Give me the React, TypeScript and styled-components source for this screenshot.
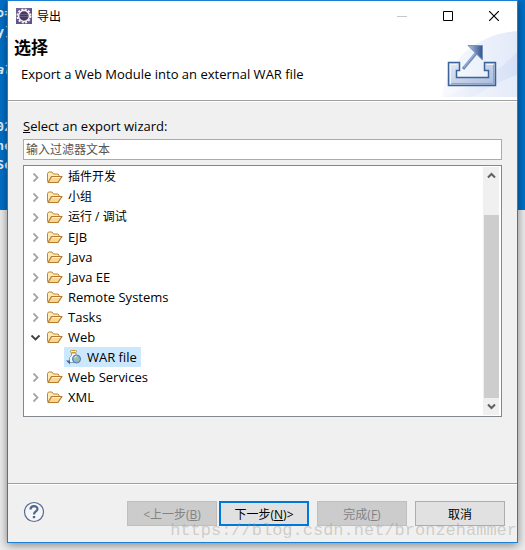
import React, { useState } from "react";
import styled, { createGlobalStyle } from "styled-components";

const GlobalStyle = createGlobalStyle`
  * { box-sizing: border-box; }
  body { margin: 0; }
  body, button, input {
    font-family: "Open Sans", "Noto Sans CJK SC", sans-serif;
    font-size: 12px;
    color: #000;
  }
`;

const Desktop = styled.div`
  position: relative;
  overflow: hidden;
  min-height: 100vh;
  padding: 0 7px 7px;
  display: flex;
  background: linear-gradient(#0070c8 0 210px, #ececec 210px);
`;

const Editor = styled.pre`
  position: absolute;
  top: 3px;
  left: 0;
  width: 12px;
  margin: 0;
  display: flex;
  flex-direction: column;
  align-items: flex-end;
  color: #e6f0fa;
  font: bold 13px/19px "DejaVu Sans Mono", monospace;
`;

const CodeLine = styled.span<{ $italic?: boolean }>`
  height: 19px;
  font-style: ${(p) => (p.$italic ? "italic" : "normal")};
`;

const Dialog = styled.main`
  position: relative;
  flex: 1;
  min-width: 0;
  display: flex;
  flex-direction: column;
  background: #f0f0f0;
  border: 1px solid #1a80d4;
  box-shadow: 0 2px 9px rgba(0, 0, 0, 0.45);
`;

const TitleBar = styled.header`
  height: 29px;
  display: flex;
  align-items: center;
  padding-left: 8px;
  background: #fff;
`;

const WindowTitle = styled.h1`
  flex: 1;
  margin: 0 0 0 5px;
  font-size: 12px;
  font-weight: 400;
`;

const WindowButton = styled.button`
  width: 46px;
  height: 29px;
  padding: 0;
  border: 0;
  background: transparent;
  display: grid;
  place-items: center;
`;

const Banner = styled.section`
  height: 71px;
  display: flex;
  justify-content: space-between;
  background: #fff;
  border-bottom: 1px solid #a0a0a0;
`;

const BannerText = styled.div`
  padding: 6px 0 0 6px;
`;

const BannerTitle = styled.h2`
  margin: 0;
  font-size: 17px;
  line-height: 24px;
  font-weight: 700;
`;

const BannerNote = styled.p`
  margin: 4px 0 0 7px;
  font-size: 13px;
  line-height: 20px;
`;

const Body = styled.section`
  flex: 1;
  display: flex;
  flex-direction: column;
  padding: 15px 15px 66px;
  border-top: 1px solid #fff;
  border-bottom: 1px solid #a0a0a0;
`;

const FilterLabel = styled.label`
  font-size: 13px;
  line-height: 18px;
`;

const FilterInput = styled.input`
  width: 100%;
  height: 21px;
  margin: 4px 0 5px;
  padding: 0 2px;
  border: 1px solid #ababab;
  background: #fff;
  &::placeholder {
    color: #555;
    opacity: 1;
  }
`;

const TreePane = styled.div`
  flex: 1;
  display: flex;
  justify-content: space-between;
  padding: 1px;
  border: 1px solid #828790;
  background: #fff;
`;

const Tree = styled.ul`
  list-style: none;
  margin: 0;
  padding: 0 0 0 3px;
`;

const TreeRow = styled.li<{ $child?: boolean }>`
  height: 20px;
  display: flex;
  align-items: center;
  padding-left: ${(p) => (p.$child ? "36px" : "0")};
`;

const Toggle = styled.button`
  width: 15px;
  height: 20px;
  margin-right: 4px;
  padding: 0;
  border: 0;
  background: transparent;
  display: grid;
  place-items: center;
`;

const Item = styled.button<{ $selected?: boolean; $child?: boolean }>`
  height: 20px;
  display: flex;
  align-items: center;
  gap: 5px;
  padding: 0 4px 0 ${(p) => (p.$child ? "2px" : "0")};
  border: 0;
  font-size: 13px;
  line-height: 20px;
  white-space: nowrap;
  background: ${(p) => (p.$selected ? "#cce8ff" : "transparent")};
`;

const Cjk = styled.span`
  font-size: 12px;
`;

const ScrollBar = styled.div`
  width: 16px;
  margin-right: 1px;
  display: flex;
  flex-direction: column;
  background: #f0f0f0;
`;

const ScrollButton = styled.button`
  height: 17px;
  padding: 0;
  border: 0;
  background: transparent;
  display: grid;
  place-items: center;
`;

const ScrollTrack = styled.div`
  flex: 1;
  display: flex;
  padding: 31px 0 0 1px;
`;

const ScrollThumb = styled.div`
  flex: 1;
  background: #cdcdcd;
`;

const Footer = styled.footer`
  height: 58px;
  display: flex;
  align-items: center;
  padding: 0 12px 0 15px;
  border-top: 1px solid #fff;
`;

const HelpButton = styled.button`
  display: flex;
  padding: 0;
  margin: 0 auto 4px 0;
  border: 0;
  background: transparent;
`;

const Actions = styled.div`
  display: flex;
  gap: 8px;
`;

const StepPair = styled.div`
  display: flex;
  gap: 2px;
`;

const ActionButton = styled.button<{ $primary?: boolean }>`
  width: 90px;
  height: 25px;
  padding: 0;
  border: ${(p) => (p.$primary ? "2px solid #0078d7" : "1px solid #adadad")};
  background: #e1e1e1;
  &:disabled {
    color: #838383;
    background: #ccc;
    border-color: #bfbfbf;
  }
`;

const Watermark = styled.span`
  position: absolute;
  right: 8px;
  bottom: 7px;
  pointer-events: none;
  color: rgba(150, 150, 140, 0.4);
  font: 17px/24px "Liberation Mono", monospace;
`;

const EclipseIcon = () => (
  <svg width="16" height="16" viewBox="0 0 16 16" aria-hidden="true">
    <rect width="16" height="16" fill="#65518a" />
    <path d="M0 0h16L0 12z" fill="#806da3" opacity=".5" />
    <circle cx="8" cy="8" r="6.5" fill="none" stroke="#f4f2ef" strokeWidth="2" strokeDasharray="2 1.4" />
    <circle cx="8" cy="8" r="5.4" fill="#46395f" stroke="#f4f2ef" strokeWidth="1.5" />
    <path d="M4 6.5h8M4 8.5h8" stroke="#665b80" />
  </svg>
);

const ExportArt = () => (
  <svg width="75" height="67" viewBox="0 0 75 67" aria-hidden="true">
    <defs>
      <linearGradient id="glow" x1="0" y1="0" x2="1" y2="0">
        <stop offset="0" stopColor="#f4f7fd" />
        <stop offset="1" stopColor="#d3def5" />
      </linearGradient>
      <linearGradient id="tray" x1="0" y1="0" x2="1" y2="1">
        <stop offset="0" stopColor="#e4eaf5" />
        <stop offset="1" stopColor="#a9badb" />
      </linearGradient>
      <linearGradient id="head" x1="0" y1="0" x2="1" y2="0">
        <stop offset="0" stopColor="#b4c3df" />
        <stop offset="1" stopColor="#31558f" />
      </linearGradient>
    </defs>
    <path d="M0 67C4 34 30 5 75 1v66z" fill="url(#glow)" opacity=".65" />
    <path d="M0 67C25 58 55 45 75 22v45z" fill="url(#glow)" opacity=".8" />
    <path d="M30 67C45 59 60 50 75 45v22z" fill="#fff" opacity=".35" />
    <path
      d="M6.500 32.500H17.500V40.500H14.500V47.500H46.500V40.500H42.500V32.500H53.500V55.500H6.500z"
      fill="url(#tray)" stroke="#3a639b" strokeWidth="1.500"
    />
    <path d="M8.500 54V34.500H15M44.500 34.500H51" fill="none" stroke="#f1f5fb" />
    <path d="M9 53.500H51.500V35" fill="none" stroke="#8ea5cc" />
    <path d="M21 39L36 21" stroke="#7791bd" strokeWidth="3" />
    <path d="M22 37L36 20" stroke="#a5b6d5" />
    <path d="M26 15.500H40.500V30z" fill="url(#head)" stroke="#7891bd" strokeWidth="1" />
  </svg>
);

const FolderIcon = () => (
  <svg width="16" height="16" viewBox="0 0 16 16" aria-hidden="true">
    <path d="M.5 12.500V4.500L1.500 3H5L6.500 5H11L12 6V8" fill="#fdebb9" stroke="#bd8639" />
    <path d="M1 13.500L4.500 7.500H15L11 13.500z" fill="#f8d793" stroke="#b67b31" strokeWidth="1.200" strokeLinejoin="round" />
    <path d="M5.500 8.500H13" stroke="#fff1cb" />
  </svg>
);

const WarIcon = () => (
  <svg width="16" height="16" viewBox="0 0 16 16" aria-hidden="true">
    <path d="M5.500 4V6.500L3.500 8.500V13.500H11V7L10 6V4z" fill="#f7f9fc" stroke="#8ba2bc" />
    <rect x="4.500" y="1.500" width="6" height="2" rx="1" fill="#fff2b6" stroke="#c79a32" />
    <circle cx="10.500" cy="10" r="4" fill="#8eb3dc" stroke="#4f78aa" />
    <path d="M8 9l2-2 2 1-1 2-1 2zM12 11l2-1-2 3z" fill="#a2c993" />
    <path d="M8.500 8.500l2-1.500" stroke="#fff" />
    <path d="M0 11.500h4v4z" fill="#286d9e" />
  </svg>
);

const Chevron = ({ open }: { open?: boolean }) => (
  <svg width="11" height="11" viewBox="0 0 11 11" fill="none" strokeWidth="1.800" aria-hidden="true">
    {open ? <path d="M1.500 3.500l4 4 4-4" stroke="#404040" /> : <path d="M3.500 1.500l4 4-4 4" stroke="#a6a6a6" />}
  </svg>
);

const ScrollArrow = ({ down }: { down?: boolean }) => (
  <svg width="9" height="7" viewBox="0 0 9 7" fill="none" aria-hidden="true">
    <path d={down ? "M1 1.500l3.500 3.500L8 1.500" : "M1 5.500L4.500 2 8 5.500"} stroke="#606060" strokeWidth="2" />
  </svg>
);

const HelpIcon = () => (
  <svg width="22" height="22" viewBox="0 0 22 22" fill="none" aria-hidden="true">
    <circle cx="11" cy="11" r="9.500" fill="#f5f6f9" stroke="#596b8f" strokeWidth="1.200" />
    <path d="M7.500 8.500C7.500 4 14.500 4 14.500 8C14.500 10.500 11 10.500 11 13.500" stroke="#52658c" strokeWidth="2.200" />
    <path d="M9.800 15h2.400v2.200H9.800z" fill="#52658c" />
  </svg>
);

const codeLines = [
  { text: "o=" }, { text: "y]" }, { text: " " }, { text: "al", italic: true }, { text: " " },
  { text: " " }, { text: "02" }, { text: "ne" }, { text: "Se" },
];

const wizards = [
  { name: "插件开发", cjk: true }, { name: "小组", cjk: true }, { name: "运行 / 调试", cjk: true },
  { name: "EJB" }, { name: "Java" }, { name: "Java EE" }, { name: "Remote Systems" },
  { name: "Tasks" }, { name: "Web", children: ["WAR file"] }, { name: "Web Services" }, { name: "XML" },
];

export default function App() {
  const [webOpen, setWebOpen] = useState(true);
  const [selected, setSelected] = useState("WAR file");
  const [filter, setFilter] = useState("");

  return (
    <Desktop>
      <GlobalStyle />
      <Editor aria-hidden="true">
        {codeLines.map((line, i) => <CodeLine key={i} $italic={line.italic}>{line.text}</CodeLine>)}
      </Editor>
      <Dialog>
        <TitleBar>
          <EclipseIcon />
          <WindowTitle>导出</WindowTitle>
          <WindowButton aria-label="最小化" disabled>
            <svg width="10" height="10"><path d="M0 5.500h10" stroke="#c8c8c8" /></svg>
          </WindowButton>
          <WindowButton aria-label="最大化">
            <svg width="10" height="10"><path d="M.5.5h9v9h-9z" fill="none" stroke="#000" /></svg>
          </WindowButton>
          <WindowButton aria-label="关闭">
            <svg width="10" height="10"><path d="M0 0l10 10M10 0L0 10" stroke="#000" strokeWidth="1.200" /></svg>
          </WindowButton>
        </TitleBar>
        <Banner>
          <BannerText>
            <BannerTitle>选择</BannerTitle>
            <BannerNote>Export a Web Module into an external WAR file</BannerNote>
          </BannerText>
          <ExportArt />
        </Banner>
        <Body>
          <FilterLabel htmlFor="filter"><u>S</u>elect an export wizard:</FilterLabel>
          <FilterInput id="filter" placeholder="输入过滤器文本" value={filter} onChange={(e) => setFilter(e.target.value)} />
          <TreePane>
            <Tree>
              {wizards.map((w) => {
                const open = Boolean(w.children) && webOpen;
                return (
                  <React.Fragment key={w.name}>
                    <TreeRow>
                      <Toggle aria-label={w.name} aria-expanded={open} onClick={() => w.children && setWebOpen(!webOpen)}>
                        <Chevron open={open} />
                      </Toggle>
                      <Item $selected={selected === w.name} onClick={() => setSelected(w.name)}>
                        <FolderIcon />
                        {w.cjk ? <Cjk>{w.name}</Cjk> : w.name}
                      </Item>
                    </TreeRow>
                    {open && w.children?.map((child) => (
                      <TreeRow key={child} $child>
                        <Item $child $selected={selected === child} onClick={() => setSelected(child)}>
                          <WarIcon />
                          {child}
                        </Item>
                      </TreeRow>
                    ))}
                  </React.Fragment>
                );
              })}
            </Tree>
            <ScrollBar>
              <ScrollButton aria-label="向上滚动"><ScrollArrow /></ScrollButton>
              <ScrollTrack><ScrollThumb /></ScrollTrack>
              <ScrollButton aria-label="向下滚动"><ScrollArrow down /></ScrollButton>
            </ScrollBar>
          </TreePane>
        </Body>
        <Footer>
          <HelpButton aria-label="帮助"><HelpIcon /></HelpButton>
          <Actions>
            <StepPair>
              <ActionButton disabled>&lt;上一步(<u>B</u>)</ActionButton>
              <ActionButton $primary>下一步(<u>N</u>)&gt;</ActionButton>
            </StepPair>
            <ActionButton disabled>完成(<u>F</u>)</ActionButton>
            <ActionButton>取消</ActionButton>
          </Actions>
        </Footer>
      </Dialog>
      <Watermark>https://blog.csdn.net/bronzehammer</Watermark>
    </Desktop>
  );
}
